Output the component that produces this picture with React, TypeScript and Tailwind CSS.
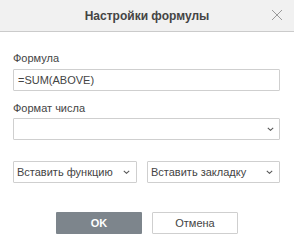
import React from "react";

function Chevron() {
  return (
    <svg width="7" height="4" viewBox="0 0 7 4" className="shrink-0">
      <path d="M0.8 0.8 L3.5 3.3 L6.2 0.8" fill="none" stroke="#555" strokeWidth="1.1" />
    </svg>
  );
}

export default function App() {
  return (
    <div
      className="w-[294px] h-[248px] bg-white flex flex-col text-[11px] text-[#444]"
      style={{ fontFamily: '"Liberation Sans", Arial, sans-serif' }}
    >
      <div className="relative h-[32px] shrink-0 bg-[#f1f1f1] border-b border-[#cbcbcb] flex items-center justify-center">
        <span className="text-[12px] font-bold text-[#444]">Настройки формулы</span>
        <svg className="absolute right-[11px] top-[9px]" width="12" height="12" viewBox="0 0 12 12">
          <path d="M1 1 L11 11 M11 1 L1 11" stroke="#9a9a9a" strokeWidth="1" fill="none" />
        </svg>
      </div>
      <div className="flex flex-col px-[13px] pr-[14px]">
        <div className="mt-[20px] leading-[13px]">Формула</div>
        <div className="mt-[4px] h-[22px] border border-[#cfcfcf] rounded-[1px] flex items-center px-[4px] text-[#444]">
          =SUM(ABOVE)
        </div>
        <div className="mt-[11px] leading-[13px]">Формат числа</div>
        <div className="mt-[3px] h-[22px] border border-[#cfcfcf] rounded-[1px] flex items-center justify-end px-[5px]">
          <Chevron />
        </div>
        <div className="mt-[21px] flex gap-[10px]">
          <div className="w-[124px] h-[22px] border border-[#cfcfcf] rounded-[1px] flex items-center justify-between px-[3px] pr-[6px]">
            <span>Вставить функцию</span>
            <Chevron />
          </div>
          <div className="flex-1 h-[22px] border border-[#cfcfcf] rounded-[1px] flex items-center justify-between px-[3px] pr-[6px]">
            <span>Вставить закладку</span>
            <Chevron />
          </div>
        </div>
      </div>
      <div className="mt-[29px] flex justify-center gap-[10px]">
        <div className="w-[86px] h-[22px] bg-[#7d858c] text-white font-bold flex items-center justify-center rounded-[1px]">
          OK
        </div>
        <div className="w-[86px] h-[22px] bg-white border border-[#cfcfcf] text-[#444] flex items-center justify-center rounded-[1px]">
          Отмена
        </div>
      </div>
    </div>
  );
}
